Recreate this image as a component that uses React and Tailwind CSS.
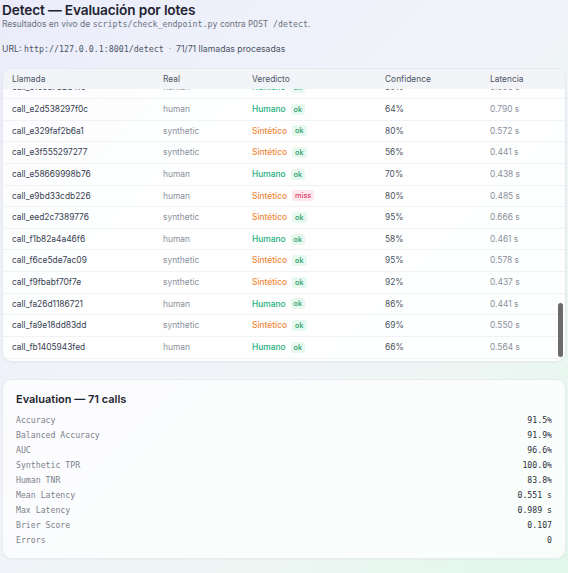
import React from "react";

const rows = [
  ["call_e1c0a7b2d4f9", "human", "h", true, "58%", "0.530 s"],
  ["call_e2d538297f0c", "human", "h", true, "64%", "0.790 s"],
  ["call_e329faf2b6a1", "synthetic", "s", true, "80%", "0.572 s"],
  ["call_e3f555297277", "synthetic", "s", true, "56%", "0.441 s"],
  ["call_e58669998b76", "human", "h", true, "70%", "0.438 s"],
  ["call_e9bd33cdb226", "human", "s", false, "80%", "0.485 s"],
  ["call_eed2c7389776", "synthetic", "s", true, "95%", "0.666 s"],
  ["call_f1b82a4a46f6", "human", "h", true, "58%", "0.461 s"],
  ["call_f6ce5de7ac09", "synthetic", "s", true, "95%", "0.578 s"],
  ["call_f9fbabf70f7e", "synthetic", "s", true, "92%", "0.437 s"],
  ["call_fa26d1186721", "human", "h", true, "86%", "0.441 s"],
  ["call_fa9e18dd83dd", "synthetic", "s", true, "69%", "0.550 s"],
  ["call_fb1405943fed", "human", "h", true, "66%", "0.564 s"],
];

const metrics = [
  ["Accuracy", "91.5%"],
  ["Balanced Accuracy", "91.9%"],
  ["AUC", "96.6%"],
  ["Synthetic TPR", "100.0%"],
  ["Human TNR", "83.8%"],
  ["Mean Latency", "0.551 s"],
  ["Max Latency", "0.989 s"],
  ["Brier Score", "0.107"],
  ["Errors", "0"],
];

const sans = "font-['Inter','Liberation_Sans',sans-serif]";
const mono = "font-['DejaVu_Sans_Mono','Liberation_Mono',monospace]";
const grid = "grid grid-cols-[151px_89px_133px_105px_1fr] items-center pl-[9px]";

export default function App() {
  return (
    <div
      className={`${sans} w-[568px] h-[573px] overflow-hidden bg-[linear-gradient(135deg,#eaecfb_0%,#f1f3fa_40%,#eef6f4_72%,#e1f8eb_100%)] px-[2px]`}
    >
      <div className="pt-[2px]">
        <h1 className="text-[13.7px] leading-[16px] font-semibold text-[#1f2430] tracking-[-0.15px]">
          Detect — Evaluación por lotes
        </h1>
        <p className="mt-[0px] text-[8.5px] leading-[12px] text-[#6b7280]">
          Resultados en vivo de <span className={`${mono} text-[8.3px]`}>scripts/check_endpoint.py</span> contra{" "}
          <span className={`${mono} text-[8.3px]`}>POST /detect</span>.
        </p>
        <p className="mt-[13px] text-[8.7px] leading-[12px] text-[#4b5563]">
          URL: <span className={`${mono} text-[8.3px]`}>http://127.0.0.1:8001/detect</span>
          <span className="text-[#9ca3af]"> &nbsp;·&nbsp; </span>
          71/71 llamadas procesadas
        </p>
      </div>

      <div className="relative mt-[13px] h-[294px] rounded-[10px] bg-white/90 border border-[#e6e8ef] shadow-[0_1px_2px_rgba(0,0,0,0.04)] overflow-hidden">
        <div className={`${grid} relative z-10 h-[20px] bg-[#f3f4f8] text-[8.4px] text-[#4b5563]`}>
          <div>Llamada</div>
          <div>Real</div>
          <div>Veredicto</div>
          <div>Confidence</div>
          <div>Latencia</div>
        </div>
        <div className="h-[272px] overflow-hidden">
          <div className="-mt-[11.6px]">
            {rows.map((r) => (
              <div
                key={r[0]}
                className={`${grid} h-[21.64px] border-b border-[#f1f2f5] text-[8.4px]`}
              >
                <div className="text-[#374151]">{r[0]}</div>
                <div className="text-[#8b919c]">{r[1]}</div>
                <div className="flex items-center gap-[5px]">
                  {r[2] === "h" ? (
                    <span className="text-[#22b07d] font-medium">Humano</span>
                  ) : (
                    <span className="text-[#ef8a3c] font-medium">Sintético</span>
                  )}
                  {r[3] ? (
                    <span className="rounded-[3px] bg-[#e7f8ef] px-[3px] text-[7.3px] leading-[11px] font-medium text-[#1f9d6b]">
                      ok
                    </span>
                  ) : (
                    <span className="rounded-[3px] bg-[#fde8ee] px-[3px] text-[7.3px] leading-[11px] font-medium text-[#e0456f]">
                      miss
                    </span>
                  )}
                </div>
                <div className="text-[#4b5563]">{r[4]}</div>
                <div className="text-[#8b919c]">{r[5]}</div>
              </div>
            ))}
          </div>
        </div>
        <div className="absolute right-[2px] top-[234px] h-[54px] w-[5px] rounded-full bg-[#6b6b6b]" />
      </div>

      <div className="mt-[17px] h-[180px] rounded-[10px] bg-white/75 border border-[#e8ebf0] shadow-[0_1px_2px_rgba(0,0,0,0.04)] px-[13px] pt-[12px]">
        <h2 className="text-[11px] leading-[14px] font-semibold text-[#1f2430]">Evaluation — 71 calls</h2>
        <div className={`${mono} mt-[7px] text-[8.2px]`}>
          {metrics.map((m) => (
            <div key={m[0]} className="flex h-[15px] items-center justify-between">
              <span className="text-[#7b818c]">{m[0]}</span>
              <span className="font-medium text-[#2b303a]">{m[1]}</span>
            </div>
          ))}
        </div>
      </div>
    </div>
  );
}
